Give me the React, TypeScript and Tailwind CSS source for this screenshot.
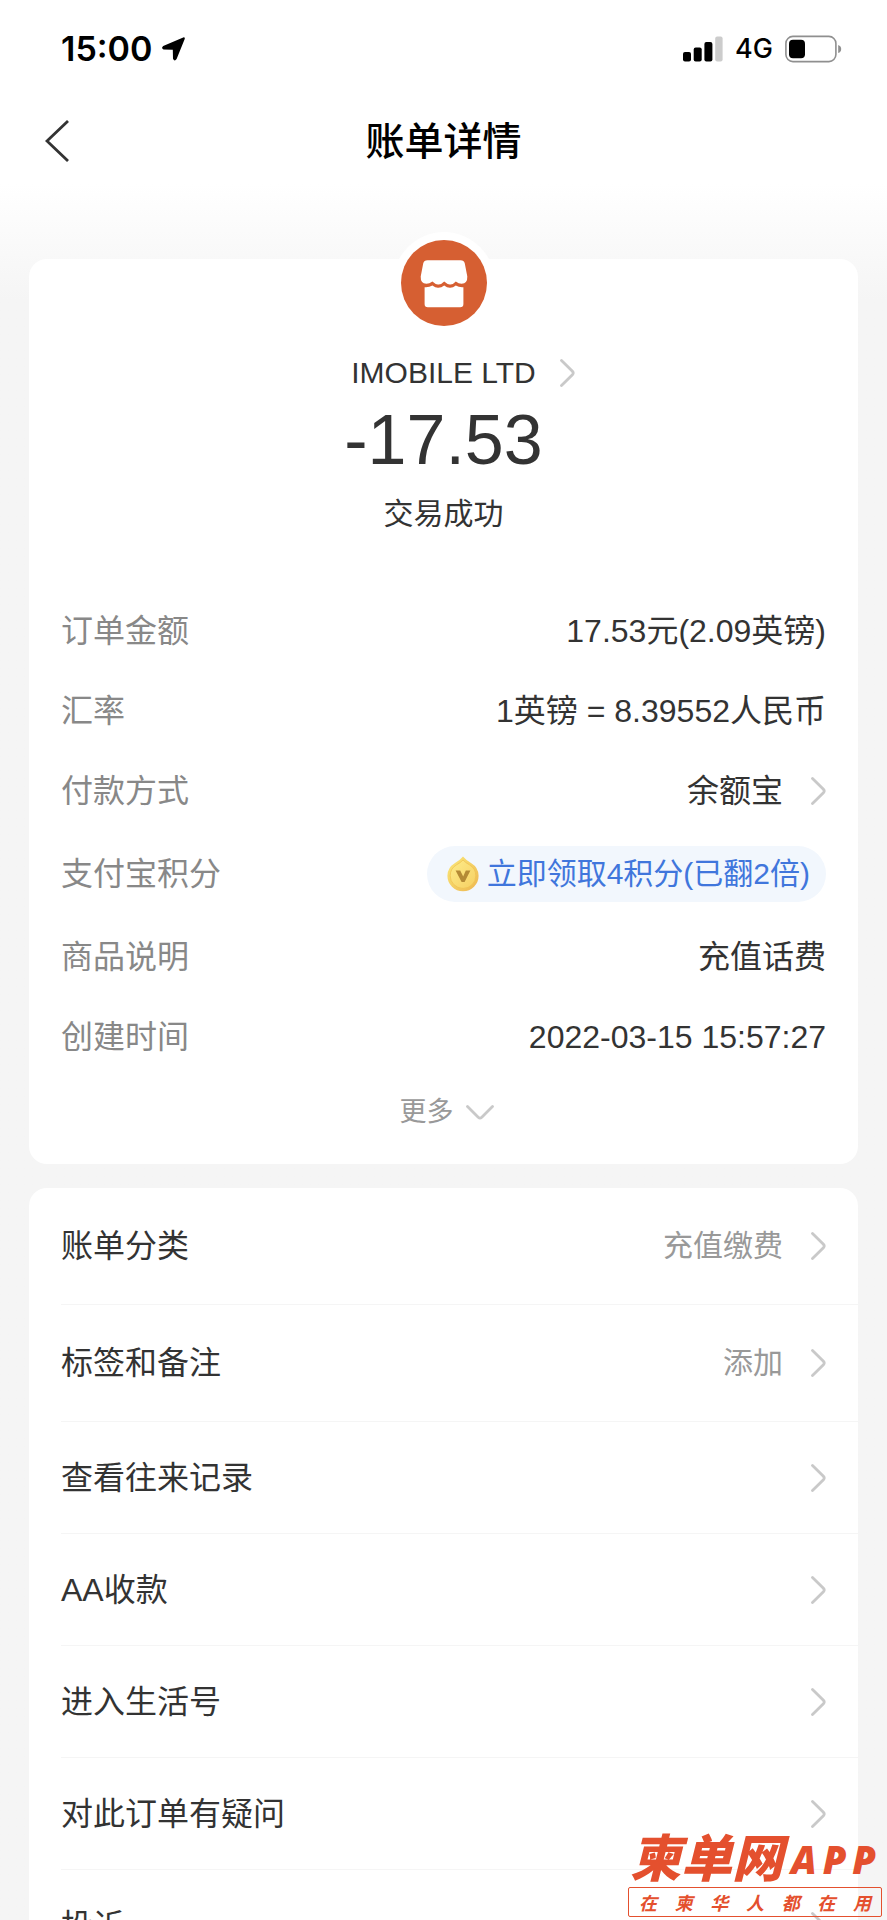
import type { ReactNode } from "react";

const SANS =
  "font-['Liberation_Sans','Noto_Sans_CJK_SC',sans-serif]";

function Chevron() {
  return (
    <svg viewBox="0 0 15 28" className="h-7 w-[15px] shrink-0" fill="none" aria-hidden="true">
      <path
        d="M1.5 1.5 L12.4 12.2 Q14 14 12.4 15.8 L1.5 26.5"
        stroke="#c9c9c9"
        strokeWidth="2.8"
        strokeLinecap="round"
      />
    </svg>
  );
}

function StatusBar() {
  return (
    <div className="flex h-[98px] items-center justify-between pr-[45px] pl-[61px] font-['Inter',sans-serif] text-black">
      <div className="flex items-center gap-2.5">
        <time className="text-[34px] leading-10 font-semibold">15:00</time>
        <svg viewBox="0 0 23 24" className="h-6 w-[23px]" aria-hidden="true">
          <path
            d="M21.2 0.4 Q23.4 0 22.6 2.2 L14.6 22 Q12.6 25 11 21.8 L10.8 12.8 L1.6 12.4 Q-1.2 11 1.2 9 Z"
            fill="#000"
          />
        </svg>
      </div>
      <div className="flex items-center gap-3">
        <svg viewBox="0 0 40 26" className="h-[26px] w-10" aria-label="信号">
          <rect x="0" y="16" width="8" height="9.5" rx="2" fill="#000" />
          <rect x="10.7" y="11.5" width="8" height="14" rx="2" fill="#000" />
          <rect x="21.4" y="6" width="8" height="19.5" rx="2" fill="#000" />
          <rect x="32.2" y="0.5" width="7.4" height="25" rx="2" fill="#ccc" />
        </svg>
        <span className="text-[27px] leading-8 font-medium">4G</span>
        <svg viewBox="0 0 57 28" className="h-7 w-[57px]" aria-label="电量">
          <rect x="0.9" y="1.4" width="50" height="25.2" rx="7" fill="none" stroke="#8f8f8f" strokeWidth="1.6" />
          <rect x="4" y="4.8" width="16" height="18.4" rx="4" fill="#000" />
          <path d="M53.2 10 Q56.2 11 56.2 14 Q56.2 17 53.2 18 Z" fill="#8f8f8f" />
        </svg>
      </div>
    </div>
  );
}

function ShopBadge() {
  return (
    <div className="-mt-[27px] flex size-[102px] items-center justify-center rounded-full bg-white">
      <svg viewBox="0 0 86 86" className="size-[86px]" aria-hidden="true">
        <circle cx="43" cy="43" r="43" fill="#d65f32" />
        <path
          d="M26.5 20.2 H59.5 Q63 20.2 63.8 23.4 L66.3 36.6 Q66.6 43.6 60.6 43.8 Q57.6 43.8 54.8 41.4 Q51.8 44.8 48.8 44.4 Q46 44 43.2 41.4 Q40 44.8 37 44.4 Q34 44 31.4 41.4 Q28.4 43.8 25.4 43.8 Q19.4 43.6 19.7 36.6 L22.2 23.4 Q23 20.2 26.5 20.2 Z"
          fill="#fff"
        />
        <path
          d="M23.6 47.2 Q28 47.6 31.4 45.6 Q34.6 48 37.4 47.8 Q40.4 47.8 43.2 45.6 Q46 47.8 48.8 47.8 Q51.8 48 54.8 45.6 Q58.2 47.6 62.4 47.2 V64 Q62.4 67.2 59.2 67.2 H26.8 Q23.6 67.2 23.6 64 Z"
          fill="#fff"
        />
      </svg>
    </div>
  );
}

function PointsIcon() {
  return (
    <svg viewBox="0 0 32 36" className="h-9 w-8 shrink-0" aria-hidden="true">
      <defs>
        <linearGradient id="coin" x1="0" y1="0" x2="1" y2="1">
          <stop offset="0" stopColor="#fbe97a" />
          <stop offset="1" stopColor="#edb650" />
        </linearGradient>
        <linearGradient id="coinFace" x1="0" y1="0" x2="1" y2="1">
          <stop offset="0" stopColor="#fdec8a" />
          <stop offset="1" stopColor="#f6cf62" />
        </linearGradient>
      </defs>
      <path
        d="M16 0.6 Q18.5 3.8 24 7 Q31.6 11.6 31.6 19.8 A15.6 15.4 0 0 1 0.4 19.8 Q0.4 11.6 8 7 Q13.5 3.8 16 0.6 Z"
        fill="url(#coin)"
      />
      <path
        d="M16 4 Q18.5 6.8 22.4 8.8 Q28.8 12.6 28.8 19.8 A12.8 12.6 0 0 1 3.2 19.8 Q3.2 12.6 9.6 8.8 Q13.5 6.8 16 4 Z"
        fill="url(#coinFace)"
        stroke="#eec04f"
        strokeWidth="0.7"
      />
      <path d="M8.6 14.6 H13.2 L16.2 20.4 L18.8 14.6 H23.4 L17.6 26 H14.6 Z" fill="#b48a35" />
    </svg>
  );
}

function Detail({ label, tall, children }: { label: string; tall?: boolean; children: ReactNode }) {
  return (
    <div className={`flex items-center justify-between ${tall ? "h-[86px]" : "h-20"}`}>
      <dt className="text-[#888]">{label}</dt>
      <dd className="text-[#333]">{children}</dd>
    </div>
  );
}

const links = [
  { label: "账单分类", value: "充值缴费" },
  { label: "标签和备注", value: "添加" },
  { label: "查看往来记录" },
  { label: "AA收款" },
  { label: "进入生活号" },
  { label: "对此订单有疑问" },
  { label: "投诉" },
];

function Watermark() {
  return (
    <div className="absolute right-[5px] bottom-[3px] w-[254px] font-['Noto_Sans_CJK_SC',sans-serif] text-[#e4502e] italic">
      <div className="mb-1.5 flex items-center justify-between pr-1.5 pl-0.5">
        <span className="text-[51px] leading-[52px] font-black">柬单网</span>
        <span className="flex gap-1.5 pt-2 font-['Open_Sans',sans-serif] text-[38px] leading-10 font-extrabold">
          <span>A</span>
          <span>P</span>
          <span>P</span>
        </span>
      </div>
      <div className="flex h-[30px] items-center justify-between rounded-xs border border-[#e4502e] px-2.5 text-[18px] leading-5 font-bold">
        {Array.from("在柬华人都在用").map((char, i) => (
          <span key={i}>{char}</span>
        ))}
      </div>
    </div>
  );
}

export default function App() {
  return (
    <div className={`relative h-screen overflow-hidden bg-[#f5f5f5] ${SANS}`}>
      <div className="bg-linear-to-b from-white from-[184px] to-[#f5f5f5] to-[300px]">
        <StatusBar />
        <header className="grid h-[86px] grid-cols-[1fr_auto_1fr] items-center px-[45px]">
          <button type="button" aria-label="返回" className="w-6">
            <svg viewBox="0 0 24 42" className="h-[42px] w-6" fill="none" aria-hidden="true">
              <path d="M23 1 L2 21 L23 41" stroke="#333" strokeWidth="2.8" />
            </svg>
          </button>
          <h1 className="pt-0.5 text-[39px] leading-[48px] font-medium text-black">账单详情</h1>
        </header>

        <main className="px-[29px] pt-[75px]">
          <section className="rounded-[18px] bg-white px-8 pb-[17px]">
            <div className="flex flex-col items-center">
              <ShopBadge />
              <a href="#merchant" className="mt-[17px] grid grid-cols-[1fr_auto_1fr] items-center gap-6 text-[30px] leading-[44px] text-[#333]">
                <span className="col-start-2">IMOBILE LTD</span>
                <Chevron />
              </a>
              <p className="mt-1.5 text-[70px] leading-[78px] text-[#333]">-17.53</p>
              <p className="mt-[13px] text-[30px] leading-[44px] text-[#333]">交易成功</p>
            </div>

            <dl className="mt-[55px] text-[32px] leading-[44px]">
              <Detail label="订单金额">17.53元(2.09英镑)</Detail>
              <Detail label="汇率">1英镑 = 8.39552人民币</Detail>
              <Detail label="付款方式">
                <a href="#payment" className="flex items-center gap-7">
                  余额宝
                  <Chevron />
                </a>
              </Detail>
              <Detail label="支付宝积分" tall>
                <button type="button" className="flex h-14 items-center gap-2 rounded-full bg-[#f2f7fd] pr-4 pl-5 text-[30px] text-[#4076dc]">
                  <PointsIcon />
                  立即领取4积分(已翻2倍)
                </button>
              </Detail>
              <Detail label="商品说明">充值话费</Detail>
              <Detail label="创建时间">2022-03-15 15:57:27</Detail>
            </dl>

            <button type="button" className="mx-auto flex h-[70px] items-center gap-3 pl-1.5 text-[27px] leading-9 text-[#999]">
              更多
              <svg viewBox="0 0 28 15" className="h-[15px] w-7" fill="none" aria-hidden="true">
                <path
                  d="M1.5 1.5 L12.2 12.2 Q14 13.8 15.8 12.2 L26.5 1.5"
                  stroke="#c9c9c9"
                  strokeWidth="2.8"
                  strokeLinecap="round"
                />
              </svg>
            </button>
          </section>

          <nav className="mt-6 rounded-[18px] bg-white pl-8">
            {links.map((link) => (
              <a
                key={link.label}
                href="#item"
                className={`flex items-center justify-between border-b border-[#f5f5f5] pr-8 text-[32px] leading-[44px] text-[#333] ${link.value ? "h-[117px]" : "h-28"}`}
              >
                {link.label}
                <span className="flex items-center gap-7 text-[30px] text-[#999]">
                  {link.value}
                  <Chevron />
                </span>
              </a>
            ))}
          </nav>
        </main>
      </div>
      <Watermark />
    </div>
  );
}
